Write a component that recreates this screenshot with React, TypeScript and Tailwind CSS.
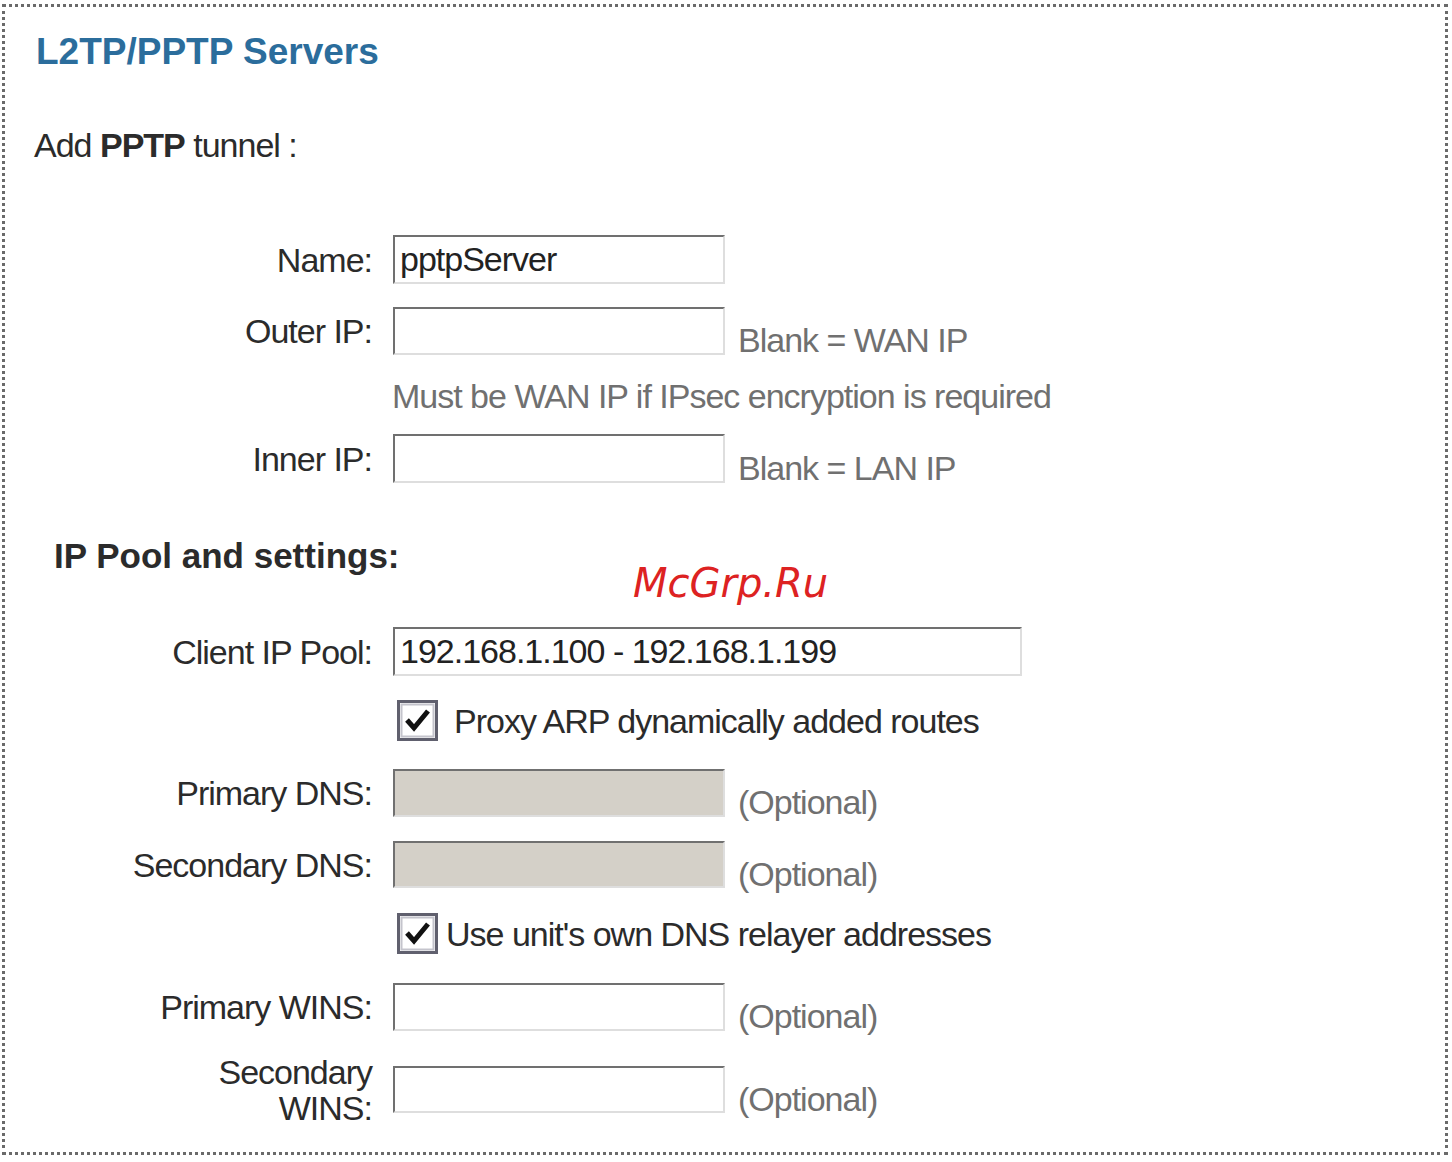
import React from 'react'

const narrow = "font-['Liberation_Sans',Arial,sans-serif] tracking-[-1px]"
const wide = "font-['Liberation_Sans',Arial,sans-serif]"

function Field({ value = '', disabled = false, wideField = false }: { value?: string; disabled?: boolean; wideField?: boolean }) {
  return (
    <input
      readOnly
      value={value}
      className={`${wideField ? 'w-[629px]' : 'w-[332px]'} h-full border-2 border-t-[#707070] border-l-[#707070] border-r-[#dedede] border-b-[#dedede] pl-[5px] text-[34px] text-[#222] outline-none ${narrow} ${
        disabled ? 'bg-[#d4d0c8]' : 'bg-white'
      }`}
    />
  )
}

function Check() {
  return (
    <svg width="41" height="41" viewBox="0 0 41 41" className="shrink-0">
      <rect x="1.5" y="1.5" width="38" height="38" fill="#fff" stroke="#60606e" strokeWidth="3" />
      <rect x="4.5" y="4.5" width="32" height="32" fill="#fff" stroke="#c4c4cc" strokeWidth="2" />
      <path d="M10 20 L17 28 L31 11" fill="none" stroke="#111" strokeWidth="5" strokeLinejoin="miter" />
    </svg>
  )
}

function Row({ label, children, hint, h = 'h-[48px]', mt }: { label: React.ReactNode; children: React.ReactNode; hint?: string; h?: string; mt: string }) {
  return (
    <div className={`flex items-center ${h} ${mt}`}>
      <div className={`w-[367px] text-right text-[34px] leading-[36px] text-[#2b2b2b] ${narrow}`}>{label}</div>
      <div className="ml-[21px] h-full">{children}</div>
      {hint && <div className={`ml-[13px] mt-[18px] text-[34px] leading-[36px] text-[#707070] whitespace-nowrap ${narrow}`}>{hint}</div>}
    </div>
  )
}

export default function App() {
  return (
    <div className="min-h-screen bg-white overflow-hidden">
      <div className="relative ml-[2px] mt-[4px] w-[1446px] h-[1151px] border-[3px] border-dotted border-[#6a6a6a]">
        <div className={`mt-[25px] ml-[31px] h-[40px] leading-[40px] text-[37px] font-bold text-[#2b6d9c] ${wide}`}>L2TP/PPTP Servers</div>

        <div className={`mt-[53px] ml-[29px] h-[40px] leading-[40px] text-[34px] text-[#2b2b2b] ${narrow}`}>
          Add <span className="font-bold">PPTP</span> tunnel :
        </div>

        <Row label="Name:" h="h-[49px]" mt="mt-[70px]">
          <Field value="pptpServer" />
        </Row>
        <Row label="Outer IP:" mt="mt-[23px]" hint="Blank = WAN IP">
          <Field />
        </Row>
        <div className={`mt-[23px] ml-[387px] h-[36px] leading-[36px] text-[34px] text-[#707070] ${narrow}`}>
          Must be WAN IP if IPsec encryption is required
        </div>
        <Row label="Inner IP:" h="h-[49px]" mt="mt-[20px]" hint="Blank = LAN IP">
          <Field />
        </Row>

        <div className={`mt-[53px] ml-[49px] h-[40px] leading-[40px] text-[35px] font-bold text-[#2b2b2b] ${wide}`}>IP Pool and settings:</div>

        <Row label="Client IP Pool:" h="h-[49px]" mt="mt-[51px]">
          <Field value="192.168.1.100 - 192.168.1.199" wideField />
        </Row>

        <div className="mt-[24px] ml-[392px] flex h-[41px] items-center">
          <Check />
          <span className={`ml-[16px] text-[34px] leading-[36px] text-[#2b2b2b] whitespace-nowrap ${narrow}`}>Proxy ARP dynamically added routes</span>
        </div>

        <Row label="Primary DNS:" mt="mt-[28px]" hint="(Optional)">
          <Field disabled />
        </Row>
        <Row label="Secondary DNS:" h="h-[47px]" mt="mt-[24px]" hint="(Optional)">
          <Field disabled />
        </Row>

        <div className="mt-[25px] ml-[392px] flex h-[41px] items-center">
          <Check />
          <span className={`ml-[8px] text-[34px] leading-[36px] text-[#2b2b2b] whitespace-nowrap ${narrow}`}>Use unit's own DNS relayer addresses</span>
        </div>

        <Row label="Primary WINS:" mt="mt-[29px]" hint="(Optional)">
          <Field />
        </Row>
        <Row
          label={
            <span className="block leading-[36px]">
              Secondary
              <br />
              WINS:
            </span>
          }
          h="h-[47px]"
          mt="mt-[35px]"
          hint="(Optional)"
        >
          <Field />
        </Row>

        <div className="absolute left-[628px] top-[546px] text-[40px] italic text-[#dd2222] font-['DejaVu_Sans',sans-serif]">
          McGrp.Ru
        </div>
      </div>
    </div>
  )
}
